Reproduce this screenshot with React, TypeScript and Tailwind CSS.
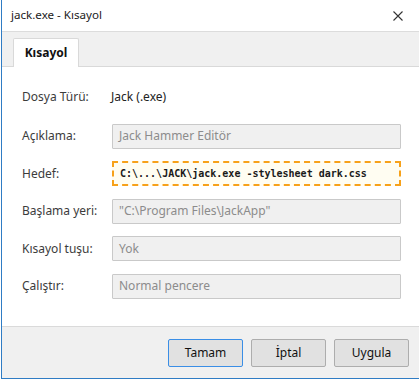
const fields = [
  { label: "Açıklama:", value: "Jack Hammer Editör" },
  { label: "Hedef:", value: "C:\\...\\JACK\\jack.exe -stylesheet dark.css", target: true },
  { label: "Başlama yeri:", value: "\"C:\\Program Files\\JackApp\"" },
  { label: "Kısayol tuşu:", value: "Yok" },
  { label: "Çalıştır:", value: "Normal pencere" },
];

const CloseIcon = () => (
  <svg width="10" height="10" viewBox="0 0 10 10" className="text-[#333]">
    <path d="M0.5 0.5 L9.5 9.5 M9.5 0.5 L0.5 9.5" stroke="currentColor" strokeWidth="1.1" />
  </svg>
);

const Field = ({ label, value, target }: { label: string; value: string; target?: boolean }) => {
  return (
    <div className="flex items-center h-[25px]">
      <div className="w-[90px] shrink-0 text-[12px] text-[#3c3c3c]">{label}</div>
      {target ? (
        <div className="w-[289px] h-[25px] border-2 border-dashed border-[#f7a11a] bg-[#fffdf2] flex items-center pl-[6px]">
          <span className="text-[10px] font-bold text-[#1a1a1a] font-['DejaVu_Sans_Mono',monospace] whitespace-pre">{value}</span>
        </div>
      ) : (
        <div className="w-[289px] h-[25px] border border-[#c9c9c9] bg-[#f0f0f0] flex items-center pl-[6px] rounded-[1px]">
          <span className="text-[12px] text-[#8c8c8c]">{value}</span>
        </div>
      )}
    </div>
  );
};

export default function App() {
  return (
    <div className="w-[419px] h-[381px] bg-white pl-px pb-[2px] font-['Noto_Sans',sans-serif] overflow-hidden">
      <div className="h-full flex flex-col border-l border-b border-[#2f7cc4]">
        <div className="h-[32px] flex items-center justify-between pl-[9px] pr-[16px] border-b border-[#dcdcdc] bg-white">
          <span className="text-[11.6px] text-[#222] -mt-[2px]">jack.exe - Kısayol</span>
          <CloseIcon />
        </div>
        <div className="h-[35px] bg-[#f0f0f0] flex items-end pl-[11px] border-b border-[#d9d9d9]">
          <div className="w-[66px] h-[29px] -mb-px bg-white border border-b-0 border-[#d9d9d9] rounded-t-[2px] flex items-center justify-center">
            <span className="text-[12px] font-bold text-[#111]">Kısayol</span>
          </div>
        </div>
        <div className="flex-1 bg-white pt-[17px] pl-[20px] flex flex-col gap-[13px]">
          <div className="flex items-center h-[25px]">
            <div className="w-[89px] shrink-0 text-[12px] text-[#3c3c3c]">Dosya Türü:</div>
            <div className="text-[12px] text-[#222]">Jack (.exe)</div>
          </div>
          <div className="flex flex-col gap-[12.5px] mt-[1.5px]">
            {fields.map((f) => (
              <Field key={f.label} label={f.label} value={f.value} target={f.target} />
            ))}
          </div>
        </div>
        <div className="h-[52px] bg-[#f0f0f0] border-t border-[#dadada] flex items-start justify-end gap-[8px] pt-[12px] pr-[10px]">
          <button className="w-[75px] h-[28px] rounded-[2px] border border-[#3a8ee6] bg-[#e1e1e1] text-[12px] text-[#111]">Tamam</button>
          <button className="w-[75px] h-[28px] rounded-[2px] border border-[#adadad] bg-[#e1e1e1] text-[12px] text-[#111]">İptal</button>
          <button className="w-[75px] h-[28px] rounded-[2px] border border-[#adadad] bg-[#e1e1e1] text-[12px] text-[#111]">Uygula</button>
        </div>
      </div>
    </div>
  );
}
